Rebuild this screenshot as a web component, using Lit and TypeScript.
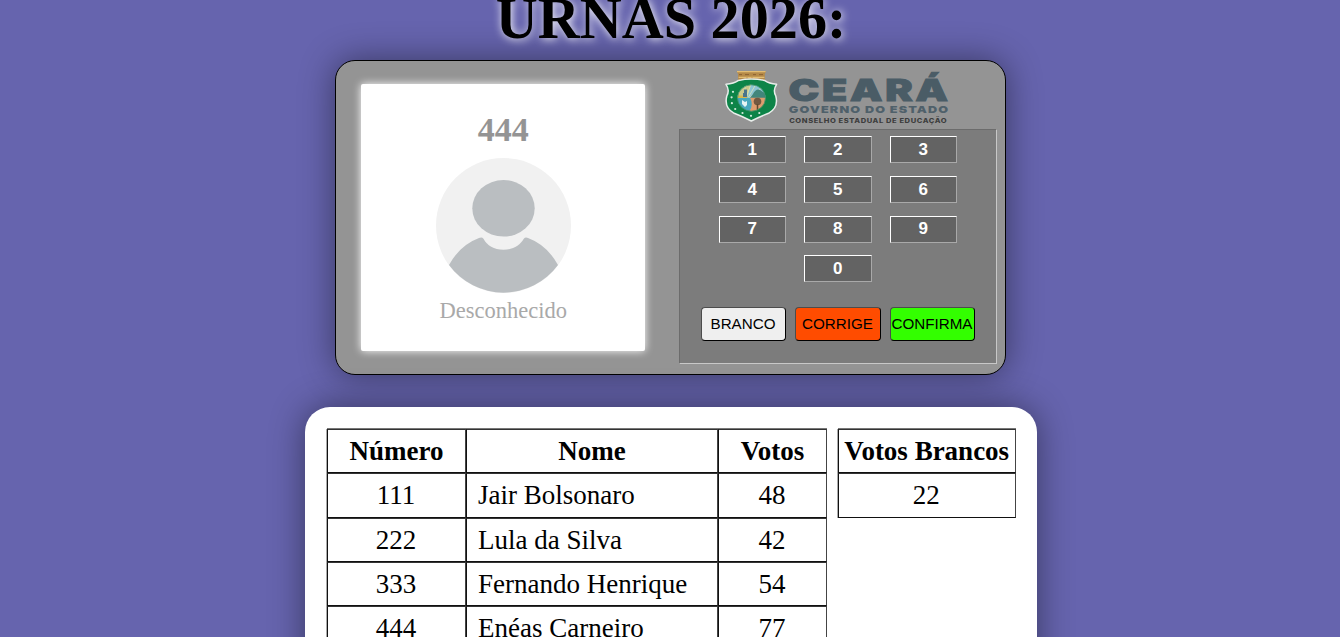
import { LitElement, html, css, svg } from "lit";
import { customElement, property } from "lit/decorators.js";

interface Candidate {
  numero: string;
  nome: string;
  votos: number;
}

const CANDIDATES: Candidate[] = [
  { numero: "111", nome: "Jair Bolsonaro", votos: 48 },
  { numero: "222", nome: "Lula da Silva", votos: 42 },
  { numero: "333", nome: "Fernando Henrique", votos: 54 },
  { numero: "444", nome: "Enéas Carneiro", votos: 77 },
];

@customElement("ceara-logo")
class CearaLogo extends LitElement {
  static styles = css`
    :host { display: block; width: 226px; height: 58px; }
    svg { display: block; }
    text { font-family: Inter, "Open Sans", sans-serif; font-weight: 900; }
    .state { font-size: 29.5px; fill: #4a5c66; stroke: #4a5c66; stroke-width: 0.9; }
    .gov { font-size: 9.600px; fill: #4f606a; }
    .council { font-size: 6.2px; font-weight: 800; fill: #3d3d3d; }
  `;

  render() {
    const stars = [[8, 22.8], [6.6, 28.3], [6.9, 34.2], [10.2, 40], [17.5, 44], [26, 46.8], [34.3, 44]];
    return html`<svg width="226" height="58" viewBox="0 0 226 58">
      <path d="M11.6 2.2H41l-1.2 2.7v6.6H13.1V4.9Z" fill="#b58a48" />
      <path d="M12 2.7h28.6M13.6 8.4h25.8" stroke="#e3bd73" stroke-width="1.3" />
      <path d="M14 5.6h3m3 0h4m4 0h3m3 0h4M15 10.5h5m2-2v3m5-3v3m3-1h7" stroke="#7d5128" stroke-width=".7" />
      <path d="M13.4 11.4Q26 8.8 39.5 11.4Q44 14.6 51.6 15.3Q47.6 21.2 50.8 27Q53.8 38.7 43.6 44.3Q36 47.3 26.3 52Q17 47.3 9.2 44.3Q-1.2 38.7 1.8 27Q5 21.2 1 15.3Q9 14.6 13.4 11.4Z" fill="#0d8448" stroke="#e9eeeb" stroke-width="1.5" stroke-linejoin="round" />
      <clipPath id="disc"><ellipse cx="26.5" cy="29" rx="14" ry="13.2" /></clipPath>
      <g clip-path="url(#disc)">
        <rect x="12" y="15" width="29" height="15" fill="#8cc4d2" />
        <path d="M12 15h14l-4 14H12Z" fill="#c8c98a" />
        <path d="M26 15l-5 14M31 15l-8 14M39 17L24 29M20 15l0 14" stroke="#dce5b8" stroke-width=".8" />
        <path d="M28 25q3-6 7-4l6 4v4H25Z" fill="#42867b" />
        <path d="M12 28.7h16V43H12Z" fill="#48a8be" />
        <path d="M25 28.7h16V43H24q5-7 1-14.300Z" fill="#dd9d6e" />
        <path d="M12 26.500h10v2.500H12Z" fill="#d7b84c" />
        <path d="M19 20.500h3V28h-4v-4h1Z" fill="#49758b" />
        <path d="M17 31l3 2 2-1v4l-2 2-3-3Z" fill="#e5f4f5" />
        <circle cx="32.500" cy="32.500" r="3.800" fill="#725840" />
        <path d="M32.500 35v6" stroke="#60492f" stroke-width="1.500" />
      </g>
      <ellipse cx="26.5" cy="29" rx="14" ry="13.2" fill="none" stroke="#3b8e65" stroke-width=".8" />
      ${stars.map(([x, y]) => svg`<circle cx=${x} cy=${y} r="1.100" fill="#d4ebdd" />`)}
      <text class="state" transform="translate(63.500 32.100) scale(1.400 1)" textLength="114" lengthAdjust="spacing">CEARÁ</text>
      <text class="gov" transform="translate(63.800 43.800) scale(1.320 1)" textLength="120.700" lengthAdjust="spacing">GOVERNO DO ESTADO</text>
      <text class="council" transform="translate(64.200 54.400) scale(1.220 1)" textLength="129" lengthAdjust="spacing">CONSELHO ESTADUAL DE EDUCAÇÃO</text>
    </svg>`;
  }
}

@customElement("voter-screen")
class VoterScreen extends LitElement {
  @property() numero = "";
  @property() nome = "";

  static styles = css`
    :host {
      display: flex; flex-direction: column; align-items: center; box-sizing: border-box;
      width: 284px; height: 267px; padding: 26px 0 0 1.500px; background: #fff; border-radius: 2px;
      box-shadow: 0 0 9px #fff; font-family: "Liberation Serif", "Times New Roman", serif;
    }
    .number { font-size: 34px; line-height: 39px; font-weight: bold; color: #949494; }
    .photo { display: block; margin-top: 9px; }
    .name { font-size: 22.5px; line-height: 26px; margin-top: 5px; color: #a9a9a9; }
  `;

  render() {
    return html`
      <div class="number">${this.numero}</div>
      <svg class="photo" width="135" height="135" viewBox="0 0 135 135">
        <circle cx="67.5" cy="67.5" r="67.5" fill="#f1f1f1" />
        <ellipse cx="67.5" cy="50.3" rx="31.200" ry="28.300" fill="#babec1" />
        <path d="M13 107Q24 87 43 80Q46 78.800 47.500 80.800C51 87.500 58 91.800 67.500 91.800S84 87.500 87.800 80.800Q89.300 78.800 92 80Q111 87 122 107A67.500 67.500 0 0 1 13 107Z" fill="#babec1" />
      </svg>
      <div class="name">${this.nome}</div>`;
  }
}

@customElement("vote-keypad")
class VoteKeypad extends LitElement {
  static styles = css`
    :host {
      display: block; box-sizing: border-box; width: 318px; height: 235px; padding: 6px 21px 0;
      background: #7c7c7c; border: 1px solid; border-color: #6c6c6c #c8c8c8 #c8c8c8 #6c6c6c;
    }
    button { box-sizing: border-box; padding: 0; margin: 0; font-family: "Liberation Sans", Arial, sans-serif; white-space: nowrap; }
    .digits { display: grid; grid-template-columns: repeat(3, 67.500px); column-gap: 18px; row-gap: 13px; padding-left: 18px; }
    .digit {
      height: 27px; background: #636363; color: #fff; font-size: 17px; font-weight: bold;
      border: 1px solid; border-color: #fff #a9a9a9 #a9a9a9 #fff;
    }
    .low { padding-bottom: 1px; }
    .zero { grid-column: 2; margin-top: -1px; }
    .actions { display: grid; grid-template-columns: 85px 86px 85px; column-gap: 9px; margin-top: 25px; }
    .action {
      display: flex; align-items: center; justify-content: center; height: 34px; padding-bottom: 1px; font-size: 15.200px; color: #000;
      border: 1px solid; border-color: #4c4c4c #000 #000 #4c4c4c; border-radius: 4px;
    }
    .blank { background: #efefef; }
    .fix { background: #ff4c00; }
    .confirm { background: #33ff00; }
  `;

  render() {
    const extra = (d: string) => (d === "0" ? "zero" : "789".includes(d) ? "low" : "");
    return html`
      <div class="digits">
        ${["1", "2", "3", "4", "5", "6", "7", "8", "9", "0"].map(
          (d) => html`<button class="digit ${extra(d)}">${d}</button>`
        )}
      </div>
      <div class="actions">
        <button class="action blank">BRANCO</button>
        <button class="action fix">CORRIGE</button>
        <button class="action confirm">CONFIRMA</button>
      </div>`;
  }
}

@customElement("app-root")
class AppRoot extends LitElement {
  static styles = css`
    :host {
      display: flex; flex-direction: column; align-items: center; height: 637px; overflow: hidden;
      background: #6664ae; font-family: "Liberation Serif", "Times New Roman", serif; color: #000;
    }
    h1 {
      flex: none; margin: -15px 0 0; padding-left: 2px; height: 75px; font-size: 58.200px; line-height: 67px;
      font-weight: bold; text-shadow: 1px 1px 10px #fff;
    }
    .machine {
      flex: none; display: flex; box-sizing: border-box; width: 671px; height: 315px; padding: 23px 8px 0 25px;
      background: #949494; border: 1px solid #000; border-radius: 20px; box-shadow: 0 0 35px rgba(0, 0, 0, 0.450);
    }
    .panel { display: flex; flex-direction: column; margin: -15px 0 0 34px; }
    .logo { margin-left: 46px; flex: none; margin-bottom: 2px; }
    .board {
      flex: none; display: flex; align-items: flex-start; gap: 11px; box-sizing: border-box; width: 732px;
      height: 290px; margin: 32px 0 0 2px; padding: 22px; background: #fff; border-radius: 25px;
      box-shadow: 0 0 35px rgba(0, 0, 0, 0.450); font-size: 27px; line-height: 31px;
    }
    .grid { display: grid; flex: none; grid-auto-rows: 44.250px; box-shadow: 0 -1px 0 #777, -1px 0 0 #aaa; }
    .votes { grid-template-columns: 139px 252px 109px; }
    .blanks { grid-template-columns: 177.500px; }
    .cell {
      display: flex; align-items: center; justify-content: center; white-space: nowrap;
      padding: 0.950px 1px 0 0; border: 1px solid; border-color: #333 #444 #111 #111;
    }
    .head { font-weight: bold; padding-right: 0; }
    .name { justify-content: flex-start; padding-left: 11px; }
  `;

  render() {
    return html`
      <h1>URNAS 2026:</h1>
      <div class="machine">
        <voter-screen numero="444" nome="Desconhecido"></voter-screen>
        <div class="panel">
          <ceara-logo class="logo"></ceara-logo>
          <vote-keypad></vote-keypad>
        </div>
      </div>
      <div class="board">
        <div class="grid votes">
          <div class="cell head">Número</div>
          <div class="cell head">Nome</div>
          <div class="cell head">Votos</div>
          ${CANDIDATES.map(
            (c) => html`<div class="cell">${c.numero}</div>
              <div class="cell name">${c.nome}</div>
              <div class="cell">${c.votos}</div>`
          )}
        </div>
        <div class="grid blanks">
          <div class="cell head">Votos Brancos</div>
          <div class="cell">22</div>
        </div>
      </div>`;
  }
}
